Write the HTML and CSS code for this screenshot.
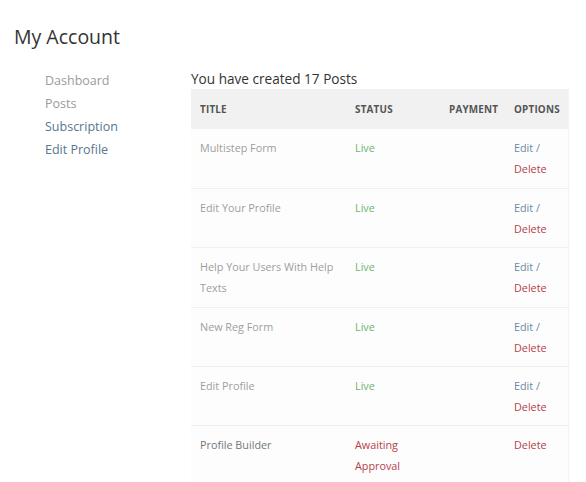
FILE: index.html
```html
<!DOCTYPE html>
<html>
<head>
<meta charset="utf-8">
<link rel="stylesheet" href="styles.css">
</head>
<body>
<h1 class="page-title">My Account</h1>
<div class="account">
  <nav class="side-nav">
    <a class="nav-link muted">Dashboard</a>
    <a class="nav-link muted">Posts</a>
    <a class="nav-link">Subscription</a>
    <a class="nav-link">Edit Profile</a>
  </nav>
  <main class="content">
    <p class="summary">You have created 17 Posts</p>
    <table class="posts">
      <colgroup>
        <col class="c-title"><col class="c-status"><col class="c-pay"><col class="c-opt">
      </colgroup>
      <thead>
        <tr><th>Title</th><th>Status</th><th class="th-pay">Payment</th><th>Options</th></tr>
      </thead>
      <tbody>
        <tr><td class="t">Multistep Form</td><td class="live">Live</td><td></td><td><a class="edit">Edit</a> <span class="slash">/</span><br><a class="del">Delete</a></td></tr>
        <tr><td class="t">Edit Your Profile</td><td class="live">Live</td><td></td><td><a class="edit">Edit</a> <span class="slash">/</span><br><a class="del">Delete</a></td></tr>
        <tr><td class="t">Help Your Users With Help Texts</td><td class="live">Live</td><td></td><td><a class="edit">Edit</a> <span class="slash">/</span><br><a class="del">Delete</a></td></tr>
        <tr><td class="t">New Reg Form</td><td class="live">Live</td><td></td><td><a class="edit">Edit</a> <span class="slash">/</span><br><a class="del">Delete</a></td></tr>
        <tr><td class="t">Edit Profile</td><td class="live">Live</td><td></td><td><a class="edit">Edit</a> <span class="slash">/</span><br><a class="del">Delete</a></td></tr>
        <tr><td class="t dark">Profile Builder</td><td class="await">Awaiting Approval</td><td></td><td><a class="del">Delete</a></td></tr>
      </tbody>
    </table>
  </main>
</div>
</body>
</html>
```
FILE: styles.css
```css
html, body {
  margin: 0;
  padding: 0;
  background: #fff;
  font-family: "Open Sans", "Noto Sans", sans-serif;
  overflow: hidden;
}
body {
  padding: 22px 0 0 14px;
}
.page-title {
  margin: 0;
  font-weight: 400;
  font-size: 19.5px;
  line-height: 30px;
  color: #333;
}
.account {
  display: flex;
  margin-top: 17px;
}
.side-nav {
  display: flex;
  flex-direction: column;
  width: 146px;
  padding-left: 31px;
  box-sizing: border-box;
  margin-right: 31px;
}
.nav-link {
  font-size: 12.5px;
  line-height: 23px;
  color: #56768f;
}
.nav-link.muted {
  color: #9b9b9b;
}
.content {
  width: 377px;
}
.summary {
  margin: 0;
  font-size: 13.6px;
  line-height: 20px;
  color: #333;
}
.posts {
  width: 377px;
  border-collapse: collapse;
  table-layout: fixed;
  background: #fdfdfd;
  border-right: 1px solid #f3f3f3;
}
.c-title { width: 155px; }
.c-status { width: 94px; }
.c-pay { width: 65px; }
.c-opt { width: 63px; }
.posts th {
  background: #f1f1f1;
  text-align: left;
  text-transform: uppercase;
  font-size: 9.9px;
  font-weight: 700;
  color: #555;
  letter-spacing: 0.2px;
  height: 40px;
  padding: 0 9px;
  box-sizing: border-box;
}
.posts td {
  vertical-align: top;
  font-size: 10.8px;
  line-height: 21px;
  padding: 8px 9px 8px;
  height: 59.4px;
  box-sizing: border-box;
  border-top: 1px solid #f0f0f0;
}
.posts tbody tr:first-child td {
  border-top: none;
}
.t { color: #9e9e9e; }
.t.dark { color: #777; }
.live { color: #6db36d; }
.await { color: #b5404c; }
.edit { color: #6b8aa3; }
.slash { color: #6b8aa3; }
.del { color: #b5404c; }
```
